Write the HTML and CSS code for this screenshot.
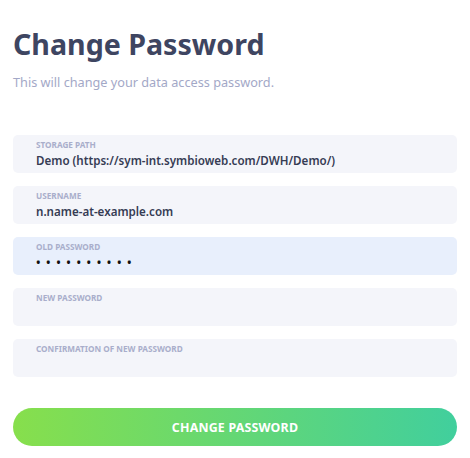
FILE: index.html
```html
<!DOCTYPE html>
<html>
<head>
<meta charset="utf-8">
<link rel="stylesheet" href="styles.css">
</head>
<body>
<div class="page">
  <h1 class="title">Change Password</h1>
  <p class="subtitle">This will change your data access password.</p>
  <form class="form">
    <div class="field">
      <div class="label">Storage path</div>
      <div class="value">Demo (https://sym-int.symbioweb.com/DWH/Demo/)</div>
    </div>
    <div class="field">
      <div class="label">Username</div>
      <div class="value">n.name-at-example.com</div>
    </div>
    <div class="field field-active">
      <div class="label">Old password</div>
      <div class="value dots">••••••••••</div>
    </div>
    <div class="field">
      <div class="label">New password</div>
      <div class="value"></div>
    </div>
    <div class="field">
      <div class="label">Confirmation of new password</div>
      <div class="value"></div>
    </div>
    <button type="button" class="btn">Change password</button>
  </form>
</div>
</body>
</html>
```

FILE: styles.css
```css
* { box-sizing: border-box; }
html, body { margin: 0; padding: 0; background: #fff; }
body { font-family: "Noto Sans", "Open Sans", sans-serif; }
.page { padding: 0 13px 0 13px; width: 470px; }
.title {
  margin: 0;
  padding-top: 25px;
  font-size: 28.6px;
  line-height: 38px;
  font-weight: 700;
  color: #3e4561;
}
.subtitle {
  margin: 9px 0 0;
  font-size: 12.7px;
  line-height: 20px;
  color: #a3a8c7;
}
.form {
  margin-top: 43px;
  display: flex;
  flex-direction: column;
  gap: 13px;
}
.field {
  height: 38px;
  border-radius: 5px;
  background: #f4f5fa;
  padding: 5px 23px 0;
}
.field-active { background: #e8effc; }
.label {
  font-size: 8.2px;
  line-height: 10px;
  font-weight: 700;
  text-transform: uppercase;
  color: #a9aecb;
}
.value {
  margin-top: 1px;
  font-size: 11.6px;
  line-height: 20px;
  font-weight: 600;
  color: #363c54;
}
.dots { color: #111; letter-spacing: 5.6px; font-size: 12px; }
.btn {
  margin-top: 18px;
  height: 38px;
  border: 0;
  border-radius: 19px;
  background: linear-gradient(90deg, #87df4c 0%, #41cf9d 100%);
  color: #fff;
  font-family: "Noto Sans", "Open Sans", sans-serif;
  font-size: 12.4px;
  font-weight: 700;
  text-transform: uppercase;
  letter-spacing: 0.2px;
}
```
